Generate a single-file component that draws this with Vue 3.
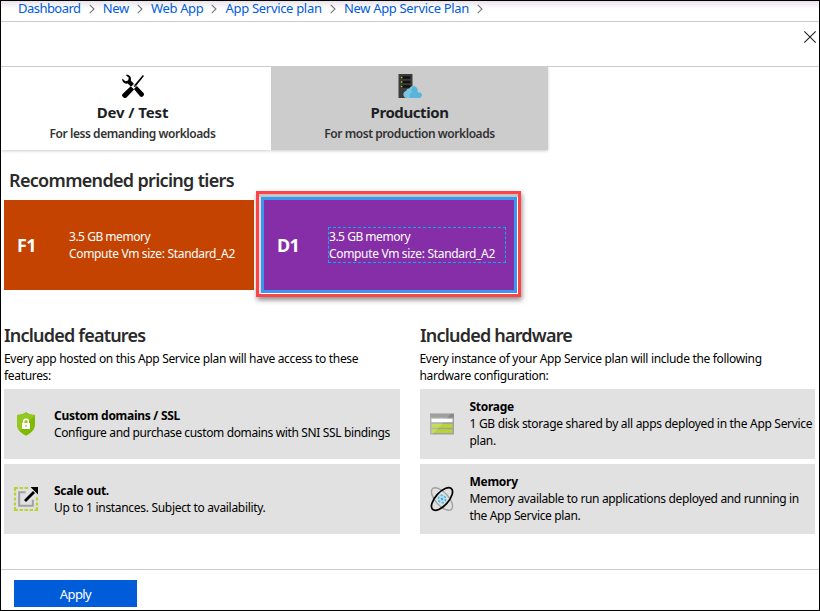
<script setup>
const crumbs = [
  { text: 'Dashboard', fit: 'fit-a' },
  { text: 'New', fit: 'fit-b' },
  { text: 'Web App', fit: 'fit-b' },
  { text: 'App Service plan', fit: 'fit-c' },
  { text: 'New App Service Plan', fit: 'fit-c' },
]
const tiers = [
  { code: 'F1', kind: 'free' },
  { code: 'D1', kind: 'shared' },
]
const columns = [
  {
    title: 'Included features',
    intro: ['Every app hosted on this App Service plan will have access to these', 'features:'],
    cards: [
      { icon: 'shield', title: 'Custom domains / SSL', lines: ['Configure and purchase custom domains with SNI SSL bindings'] },
      { icon: 'scale', title: 'Scale out.', lines: ['Up to 1 instances. Subject to availability.'] },
    ],
  },
  {
    title: 'Included hardware',
    intro: ['Every instance of your App Service plan will include the following', 'hardware configuration:'],
    cards: [
      { icon: 'storage', title: 'Storage', lines: ['1 GB disk storage shared by all apps deployed in the App Service', 'plan.'] },
      { icon: 'memory', title: 'Memory', lines: ['Memory available to run applications deployed and running in', 'the App Service plan.'] },
    ],
  },
]
</script>

<template>
  <div class="frame">
    <nav class="crumbs">
      <template v-for="c in crumbs" :key="c.text">
        <a :class="c.fit">{{ c.text }}</a>
        <svg class="chev" width="6" height="10" viewBox="0 0 6 10"><path d="M.7.9 5 5 .7 9.1" fill="none" stroke="#777" stroke-width="1.1" /></svg>
      </template>
    </nav>
    <div class="closebar">
      <svg width="12" height="12" viewBox="0 0 12 12"><path d="M.3.3 11.7 11.7M11.7.3.3 11.7" stroke="#222" stroke-width="1.1" /></svg>
    </div>

    <div class="tabs">
      <div class="tab dev">
        <svg class="tabicon" width="24" height="24" viewBox="0 0 24 24">
          <path d="M12.6 12 21.8 1l1.200.9L14 13.200z" fill="#000" />
          <path d="m9.7 12.300 3.400 3.200-7.600 8.100c-.7.7-2 .6-2.900-.2l-1-.9c-.8-.7-.8-1.700 0-2.500z" fill="#000" />
          <path d="M4.700.9c3.400-.8 6.100 2 5.100 5.700l3.100 3.200-2.900 3-3.300-3.300C3.500 10.300.7 7.700 1.300 4.500l3 2.700 2.800-.7.700-2.700z" fill="#000" />
          <path d="m12.900 14.900 2.900-2.800 6.700 7c1.700 1.800-1.300 5-3.300 3.300z" fill="#000" />
          <path d="m11.300 11.500 2-.9 1.100 2.100" fill="none" stroke="#999" stroke-width=".8" />
        </svg>
        <h3 class="devtitle">Dev / Test</h3>
        <p>For less demanding workloads</p>
      </div>
      <div class="tab prod">
        <svg class="tabicon" width="24" height="24" viewBox="0 0 24 24">
          <path d="M.5 0h14v24H.5z" fill="#3c3c3c" />
          <path d="M2.500 2.200h10v2.600h-10zM2.500 6.700h10v2.600h-10zM2.500 11.200h10v2.600h-10z" fill="#111" />
          <path d="M2.800 2.800h1.600v1.500H2.800zM2.800 7.300h1.600v1.500H2.800zM2.800 11.800h1.600v1.500H2.800z" fill="#b8d432" />
          <path d="M8.800 24a3.500 3.500 0 0 1-.5-6.900c.3-2 2-2.500 3-2.200 1.200-3.600 6.700-4.100 8.200.3.500 1.200.4 2.200.2 3.200 4.800-.5 5.700 4.700 1.800 5.600z" fill="#59b4d9" />
          <path d="M8.800 24a3.500 3.500 0 0 1-.5-6.900c.3-2 2-2.500 3-2.200.8-2 2.800-2.900 4.600-2.500-3 1.500-2.800 4.300-1.500 5.800-2.900.8-3.600 3.500-1.900 5.800z" fill="#7cc5e2" />
        </svg>
        <h3 class="prodtitle">Production</h3>
        <p>For most production workloads</p>
      </div>
    </div>

    <h2 class="rec">Recommended pricing tiers</h2>
    <div class="tiers">
      <div v-for="t in tiers" :key="t.code" class="tier" :class="t.kind">
        <strong>{{ t.code }}</strong>
        <div class="spec">
          <div class="mem">3.5 GB memory</div>
          <div class="vm">Compute Vm size: Standard_A2</div>
        </div>
      </div>
    </div>

    <div class="cols">
      <section v-for="(col, i) in columns" :key="col.title" :class="i ? 'hardware' : 'features'">
        <h2>{{ col.title }}</h2>
        <div class="intro"><div v-for="l in col.intro" :key="l">{{ l }}</div></div>
        <div v-for="card in col.cards" :key="card.title" class="card" :class="card.icon">
          <svg v-if="card.icon === 'shield'" width="24" height="24" viewBox="0 0 24 24">
            <path d="M12 .2c2.600 1.800 5.700 2.500 9 2.700v9.300c0 6-4.300 9-9 11.600-4.700-2.600-9-5.600-9-11.600V2.900c3.300-.2 6.400-.9 9-2.700z" fill="#7fba00" />
            <path d="M12 .2c2.600 1.800 5.700 2.500 9 2.700L5.600 18.800C4 17.200 3 15.100 3 12.200V2.900c3.300-.2 6.400-.9 9-2.700z" fill="#94c820" />
            <path d="M8 11h8v6H8z" fill="#fff" />
            <path d="M9.700 11.300V9.500c0-3 4.600-3 4.600 0v1.800" fill="none" stroke="#fff" stroke-width="1.500" />
            <path d="M11.500 13h1v2h-1z" fill="#7fba00" />
          </svg>
          <svg v-else-if="card.icon === 'scale'" width="24" height="24" viewBox="0 0 24 24">
            <path d="M1 4V1h3M5.500 1h3.500M10.500 1H14M1 5.500v3M1 10.500v3M1 15.500v3M1 20v3h3M5.500 23h3.500M10.500 23H14M15.500 23h3.500M20.500 23H23v-3M23 18.500v-3M23 13.500V10.500" fill="none" stroke="#b8d432" stroke-width="2.200" />
            <path d="M11.500 5.200H5.200v13.600h13.600v-6" fill="none" stroke="#a0a1a2" stroke-width="2" />
            <path d="m11 14 9-9" stroke="#000" stroke-width="2.800" />
            <path d="M16.500 0H24v7.500z" fill="#000" />
          </svg>
          <svg v-else-if="card.icon === 'storage'" width="24" height="24" viewBox="0 0 24 24">
            <path d="M0 1.700h24v20.800H0z" fill="#a0a1a2" />
            <path d="M0 1.700h24v3.800H0z" fill="#888" />
            <path d="M1.500 6.700h21v3.500h-21z" fill="#fff" />
            <path d="M1.500 12h21v3.700h-21zM1.500 17.200h21V21h-21z" fill="#b8d432" />
            <path d="M0 1.700h21L2.500 22.500H0z" fill="#fff" opacity=".2" />
          </svg>
          <svg v-else width="24" height="24" viewBox="0 0 24 24">
            <ellipse cx="12" cy="12" rx="14" ry="6.500" transform="rotate(48 12 12)" fill="none" stroke="#a0a1a2" stroke-width="1.400" />
            <circle cx="12" cy="12" r="4.600" fill="#b9e0f0" />
            <circle cx="12" cy="12" r="3.700" fill="none" stroke="#59b4d9" stroke-width="1.600" stroke-dasharray="2.200 1.675" />
            <circle cx="12" cy="12" r="1.300" fill="#45aedb" />
            <ellipse cx="12" cy="12" rx="14" ry="6.500" transform="rotate(-48 12 12)" fill="none" stroke="#000" stroke-width="1.700" />
          </svg>
          <div class="body">
            <h4>{{ card.title }}</h4>
            <div v-for="l in card.lines" :key="l">{{ l }}</div>
          </div>
        </div>
      </section>
    </div>

    <footer><button>Apply</button></footer>
  </div>
</template>

<style>
body { background: #fff; }
</style>
<style scoped>
.frame { box-sizing: border-box; width: 820px; height: 611px; border: 1px solid #000; background: #fff; overflow: hidden; display: flex; flex-direction: column; font: 12px/17px "Noto Sans", "Open Sans", sans-serif; color: #000; }
h2, h3, h4, p { margin: 0; }
svg { display: block; flex: none; overflow: visible; }
.crumbs { flex: none; box-sizing: border-box; height: 21px; padding: 0 0 5px 17px; border-bottom: 1px solid #ccc; background: linear-gradient(#e9e3e9, #fff 8px); display: flex; align-items: center; font-size: 13px; color: #015cda; }
.crumbs a { white-space: nowrap; }
.chev { margin: 0 8.15px; }
.fit-a { letter-spacing: -.54px; }
.fit-b { letter-spacing: -.37px; }
.fit-c { letter-spacing: -.32px; }
.closebar { flex: none; box-sizing: border-box; height: 45px; border-bottom: 1px solid #ccc; display: flex; justify-content: flex-end; padding: 9px 3px 0 0; }
.tabs { flex: none; display: flex; height: 83px; }
.tab { box-sizing: border-box; display: flex; flex-direction: column; align-items: center; padding-top: 7px; box-shadow: 0 1px 3px rgba(0, 0, 0, .2); clip-path: inset(0 -4px -4px 0); }
.dev { width: 270px; padding-right: 7px; }
.prod { width: 277px; background: #ccc; }
.tab h3 { font-size: 15px; line-height: 20px; font-weight: 700; color: #1d1f24; margin-top: 4px; }
.tab p { font-weight: 600; color: #333; margin-top: 3px; letter-spacing: -.45px; }
.devtitle { letter-spacing: -.13px; }
.prodtitle { letter-spacing: -.42px; }
h2 { font-size: 18px; line-height: 24px; font-weight: 600; color: #2a2a2a; }
.rec { flex: none; padding: 18px 0 8px 8px; letter-spacing: -.68px; }
.tiers { flex: none; display: flex; gap: 10px; padding-left: 3px; height: 90px; }
.tier { box-sizing: border-box; width: 250px; height: 90px; display: flex; align-items: center; color: #fff; padding-left: 13px; }
.tier strong { width: 51px; font-size: 18px; letter-spacing: -.6px; }
.free { background: #c44300; }
.shared { position: relative; background: #862ea8; box-shadow: 0 0 0 3px #3a96ee; }
/* highlight ring around the selected tier */
.shared::after { content: ""; position: absolute; inset: -9px -7px -7px -8px; border: 3px solid #ff4245; box-shadow: 1px 3px 5px rgba(0, 0, 0, .45), inset 0 3px 0 #c4c4c4, inset 2px 0 0 #ddd; }
.spec { box-sizing: border-box; width: 178px; height: 36px; border: 1px dashed transparent; white-space: nowrap; }
.shared .spec { border-color: #08aeea; }
.mem { letter-spacing: -.48px; }
.vm { letter-spacing: -.33px; }
.cols { flex: 1; display: flex; gap: 20px; padding: 33px 0 0 3px; }
.features { width: 396px; }
.hardware { width: 395px; }
.cols h2 { letter-spacing: -.8px; }
.intro { padding: 3px 0 5px; letter-spacing: -.32px; white-space: nowrap; }
.hardware .intro { margin-left: -.5px; }
.card { box-sizing: border-box; height: 70px; margin-bottom: 5px; background: #e1e1e1; display: flex; align-items: center; padding-left: 10px; }
.body { margin-left: 16px; padding-bottom: 1px; white-space: nowrap; letter-spacing: -.31px; }
.hardware .body { margin-left: 15.5px; }
.shield .body { letter-spacing: -.36px; }
.storage .body { letter-spacing: -.3px; }
.memory .body { letter-spacing: -.35px; }
.card h4 { font-size: 12px; font-weight: 700; letter-spacing: -.28px; }
footer { flex: none; box-sizing: border-box; height: 41px; border-top: 1px solid #ccc; padding: 10px 0 0 13px; }
button { display: block; width: 123px; height: 27px; border: 0; padding: 2px 0 0; background: #015cda; color: #fff; font: 13px/17px "Noto Sans", "Open Sans", sans-serif; letter-spacing: -.6px; }
</style>
